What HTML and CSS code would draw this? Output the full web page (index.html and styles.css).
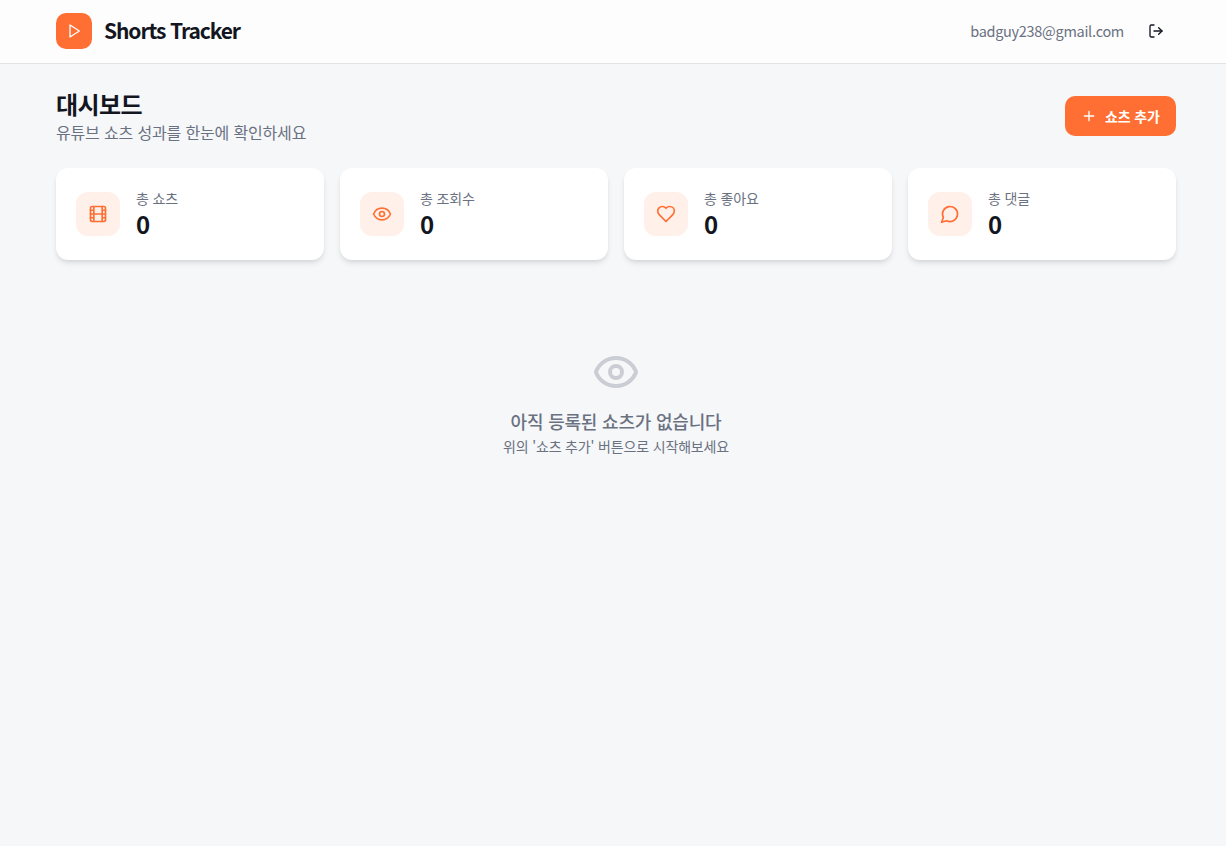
FILE: index.html
```html
<!DOCTYPE html>
<html lang="ko">
<head>
    <meta charset="UTF-8">
    <meta name="viewport" content="width=device-width, initial-scale=1.0">
    <title>Shorts Tracker</title>
    <link rel="stylesheet" href="styles.css">
</head>
<body>
    <header class="header">
        <div class="brand">
            <div class="logo">
                <svg class="icon" width="16" height="16" viewBox="0 0 24 24"><path d="M6 3l14 9-14 9z"/></svg>
            </div>
            <h1>Shorts Tracker</h1>
        </div>
        <div class="user">
            <span class="email">badguy238@gmail.com</span>
            <button class="logout" type="button" aria-label="로그아웃">
                <svg class="icon" width="16" height="16" viewBox="0 0 24 24"><path d="M9 21H5a2 2 0 0 1-2-2V5a2 2 0 0 1 2-2h4"/><path d="M16 17l5-5-5-5"/><path d="M21 12H9"/></svg>
            </button>
        </div>
    </header>

    <main>
        <div class="page-head">
            <div>
                <h2>대시보드</h2>
                <p class="subtitle">유튜브 쇼츠 성과를 한눈에 확인하세요</p>
            </div>
            <button class="add-button" type="button">
                <svg class="icon" width="16" height="16" viewBox="0 0 24 24"><path d="M5 12h14M12 5v14"/></svg>
                쇼츠 추가
            </button>
        </div>

        <section class="stats">
            <div class="card">
                <div class="card-icon">
                    <svg class="icon" width="20" height="20" viewBox="0 0 24 24"><rect x="3" y="3" width="18" height="18" rx="2"/><path d="M7 3v18M3 7.5h4M3 12h18M3 16.5h4M17 3v18M17 7.5h4M17 16.5h4"/></svg>
                </div>
                <div>
                    <p class="label">총 쇼츠</p>
                    <p class="value">0</p>
                </div>
            </div>
            <div class="card">
                <div class="card-icon">
                    <svg class="icon" width="20" height="20" viewBox="0 0 24 24"><path d="M2.062 12.348a1 1 0 0 1 0-.696 10.75 10.75 0 0 1 19.876 0 1 1 0 0 1 0 .696 10.75 10.75 0 0 1-19.876 0"/><circle cx="12" cy="12" r="3"/></svg>
                </div>
                <div>
                    <p class="label">총 조회수</p>
                    <p class="value">0</p>
                </div>
            </div>
            <div class="card">
                <div class="card-icon">
                    <svg class="icon" width="20" height="20" viewBox="0 0 24 24"><path d="M19 14c1.49-1.46 3-3.21 3-5.5A5.5 5.5 0 0 0 16.5 3c-1.76 0-3 .5-4.5 2-1.5-1.5-2.74-2-4.5-2A5.5 5.5 0 0 0 2 8.5c0 2.3 1.5 4.05 3 5.5l7 7Z"/></svg>
                </div>
                <div>
                    <p class="label">총 좋아요</p>
                    <p class="value">0</p>
                </div>
            </div>
            <div class="card">
                <div class="card-icon">
                    <svg class="icon" width="20" height="20" viewBox="0 0 24 24"><path d="M7.9 20A9 9 0 1 0 4 16.1L2 22Z"/></svg>
                </div>
                <div>
                    <p class="label">총 댓글</p>
                    <p class="value">0</p>
                </div>
            </div>
        </section>

        <section class="empty">
            <svg class="icon" width="48" height="48" viewBox="0 0 24 24"><path d="M2.062 12.348a1 1 0 0 1 0-.696 10.75 10.75 0 0 1 19.876 0 1 1 0 0 1 0 .696 10.75 10.75 0 0 1-19.876 0"/><circle cx="12" cy="12" r="3"/></svg>
            <p class="empty-title">아직 등록된 쇼츠가 없습니다</p>
            <p class="empty-text">위의 '쇼츠 추가' 버튼으로 시작해보세요</p>
        </section>
    </main>
</body>
</html>
```
FILE: styles.css
```css
* {
    margin: 0;
    padding: 0;
    box-sizing: border-box;
}

body {
    font-family: "Noto Sans CJK KR", sans-serif;
    background-color: #f6f7f9;
    color: #13161f;
    min-height: 100vh;
}

button {
    border: none;
    font-family: inherit;
    cursor: pointer;
}

.icon {
    display: block;
    flex-shrink: 0;
    fill: none;
    stroke: currentColor;
    stroke-width: 2;
    stroke-linecap: round;
    stroke-linejoin: round;
}

/* Header */
.header {
    display: flex;
    align-items: center;
    justify-content: space-between;
    height: 64px;
    padding: 0 50px 1px 56px;
    background-color: #fdfdfd;
    border-bottom: 1px solid #e2e3e6;
}

.brand {
    display: flex;
    align-items: center;
    gap: 12px;
}

.logo {
    display: flex;
    align-items: center;
    justify-content: center;
    width: 36px;
    height: 36px;
    border-radius: 10px;
    background-color: #ff6f33;
    color: #fff;
}

h1 {
    font-size: 21px;
    line-height: 28px;
    padding-bottom: 2px;
    font-weight: 700;
    letter-spacing: -1.1px;
}

.user {
    display: flex;
    align-items: center;
    gap: 12px;
}

.email {
    font-size: 14.5px;
    line-height: 20px;
    letter-spacing: -0.3px;
    color: #6a7181;
}

.logout {
    display: flex;
    align-items: center;
    justify-content: center;
    width: 40px;
    height: 40px;
    background: none;
    color: #13161f;
}

/* Dashboard */
main {
    padding: 24px 50px 24px 56px;
}

.page-head {
    display: flex;
    align-items: center;
    justify-content: space-between;
    height: 56px;
    margin-bottom: 24px;
}

h2 {
    font-size: 24px;
    line-height: 32px;
    font-weight: 700;
    letter-spacing: -0.6px;
}

.subtitle {
    font-size: 16px;
    line-height: 24px;
    letter-spacing: -0.16px;
    color: #6a7181;
}

.add-button {
    display: flex;
    align-items: center;
    gap: 8px;
    width: 111px;
    height: 40px;
    padding: 0 16px;
    border-radius: 10px;
    background-color: #ff6f33;
    color: #fff;
    font-size: 14px;
    font-weight: 700;
    letter-spacing: -0.15px;
}

.stats {
    display: grid;
    grid-template-columns: repeat(4, 1fr);
    gap: 16px;
}

.card {
    display: flex;
    align-items: center;
    gap: 16px;
    height: 92px;
    padding: 0 20px;
    border-radius: 12px;
    background-color: #fff;
    box-shadow: 0 4px 6px -1px rgba(0, 0, 0, 0.1), 0 2px 4px -2px rgba(0, 0, 0, 0.1);
}

.card-icon {
    display: flex;
    align-items: center;
    justify-content: center;
    width: 44px;
    height: 44px;
    border-radius: 12px;
    background-color: #fff0ea;
    color: #ff6f33;
}

.label {
    font-size: 14px;
    line-height: 20px;
    letter-spacing: -0.15px;
    color: #6a7181;
}

.value {
    font-size: 24px;
    line-height: 32px;
    font-weight: 700;
}

/* Empty state */
.empty {
    display: flex;
    flex-direction: column;
    align-items: center;
    padding-top: 88px;
    color: #6a7181;
}

.empty .icon {
    margin-bottom: 12px;
    color: #cbcdd4;
}

.empty-title {
    font-size: 18px;
    line-height: 26px;
    margin-bottom: 2px;
    font-weight: 500;
    letter-spacing: -0.2px;
}

.empty-text {
    font-size: 14px;
    line-height: 20px;
    letter-spacing: -0.16px;
}
```
